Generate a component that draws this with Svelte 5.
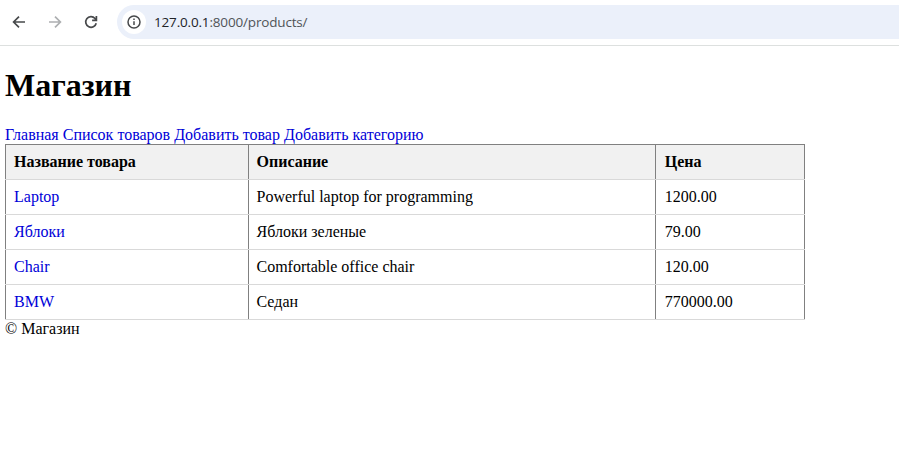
<script>
  const links = ['Главная', 'Список товаров', 'Добавить товар', 'Добавить категорию'];
  const products = [
    { name: 'Laptop', description: 'Powerful laptop for programming', price: '1200.00' },
    { name: 'Яблоки', description: 'Яблоки зеленые', price: '79.00' },
    { name: 'Chair', description: 'Comfortable office chair', price: '120.00' },
    { name: 'BMW', description: 'Седан', price: '770000.00' }
  ];
</script>

<div class="window">
  <div class="toolbar">
    <svg class="icon back" viewBox="0 0 16 16"><path d="M14 8H2.8M8 2.6L2.6 8L8 13.4" /></svg>
    <svg class="icon forward" viewBox="0 0 16 16"><path d="M2 8H13.2M8 2.6L13.4 8L8 13.4" /></svg>
    <svg class="icon reload" viewBox="0 0 16 16"><path d="M13.2 9.2A5.3 5.3 0 1 1 12 4.5L13.3 6M13.4 2V6.3H9.1" /></svg>
    <div class="address">
      <span class="info">
        <svg class="icon" viewBox="0 0 16 16"><circle cx="8" cy="8" r="6" /><path d="M8 7.2V11M8 4.6V6.1" /></svg>
      </span>
      <span class="url"><span class="host">127.0.0.1</span>:8000/products/</span>
    </div>
  </div>

  <main>
    <h1>Магазин</h1>
    <nav>
      {#each links as link}<a href="#top">{link}</a>{' '}{/each}
    </nav>
    <table>
      <colgroup><col class="c1" /><col class="c2" /><col class="c3" /></colgroup>
      <thead>
        <tr><th>Название товара</th><th>Описание</th><th>Цена</th></tr>
      </thead>
      <tbody>
        {#each products as p}
          <tr><td><a href="#top">{p.name}</a></td><td>{p.description}</td><td>{p.price}</td></tr>
        {/each}
      </tbody>
    </table>
    <footer>© Магазин</footer>
  </main>
</div>

<style>
  .window {
    height: 458px;
    overflow: hidden;
    background: #fff;
    color: #000;
    font: 16px/18px 'Liberation Serif', 'Times New Roman', serif;
  }
  .toolbar {
    box-sizing: border-box;
    height: 46px;
    padding-left: 11px;
    display: flex;
    align-items: center;
    gap: 20px;
    border-bottom: 1px solid #dde0df;
  }
  .icon {
    display: block;
    flex: none;
    width: 16px;
    height: 16px;
    fill: none;
    stroke: #47494b;
    stroke-width: 1.7;
  }
  .forward { stroke: #adafb1; }
  .address {
    flex: 1;
    height: 34px;
    margin-left: -2px;
    padding-left: 5px;
    display: flex;
    align-items: center;
    gap: 8px;
    margin-top: -1px;
    border-radius: 17px 0 0 17px;
    background: #ebf0fa;
  }
  .toolbar > .icon { margin-top: -1px; }
  .info {
    width: 24px;
    height: 24px;
    display: grid;
    place-items: center;
    border-radius: 50%;
    background: #fff;
  }
  .info .icon { stroke-width: 1.5; }
  .url {
    font: 13.5px/20px 'Open Sans', 'Noto Sans', sans-serif;
    letter-spacing: -0.17px;
    color: #505458;
  }
  .host { color: #202328; }
  main { padding: 20px 5px 0; }
  h1 {
    margin: 0;
    font-size: 32px;
    line-height: 38px;
  }
  nav {
    margin-top: 22px;
    white-space: nowrap;
  }
  a {
    color: #0000d8;
    text-decoration: none;
  }
  table {
    width: 800px;
    table-layout: fixed;
    border-collapse: collapse;
  }
  .c1 { width: 243px; }
  .c2 { width: 407px; }
  th, td {
    height: 18px;
    padding: 8px;
    border: 1px solid #808080;
    border-bottom-color: #d9d9d9;
    text-align: left;
  }
  td { border-top-color: #d9d9d9; }
  th:nth-child(2), td:nth-child(2) { padding-left: 7.5px; }
  th:nth-child(3), td:nth-child(3) { padding-left: 8.7px; }
  th { background: #f1f1f1; }
</style>
